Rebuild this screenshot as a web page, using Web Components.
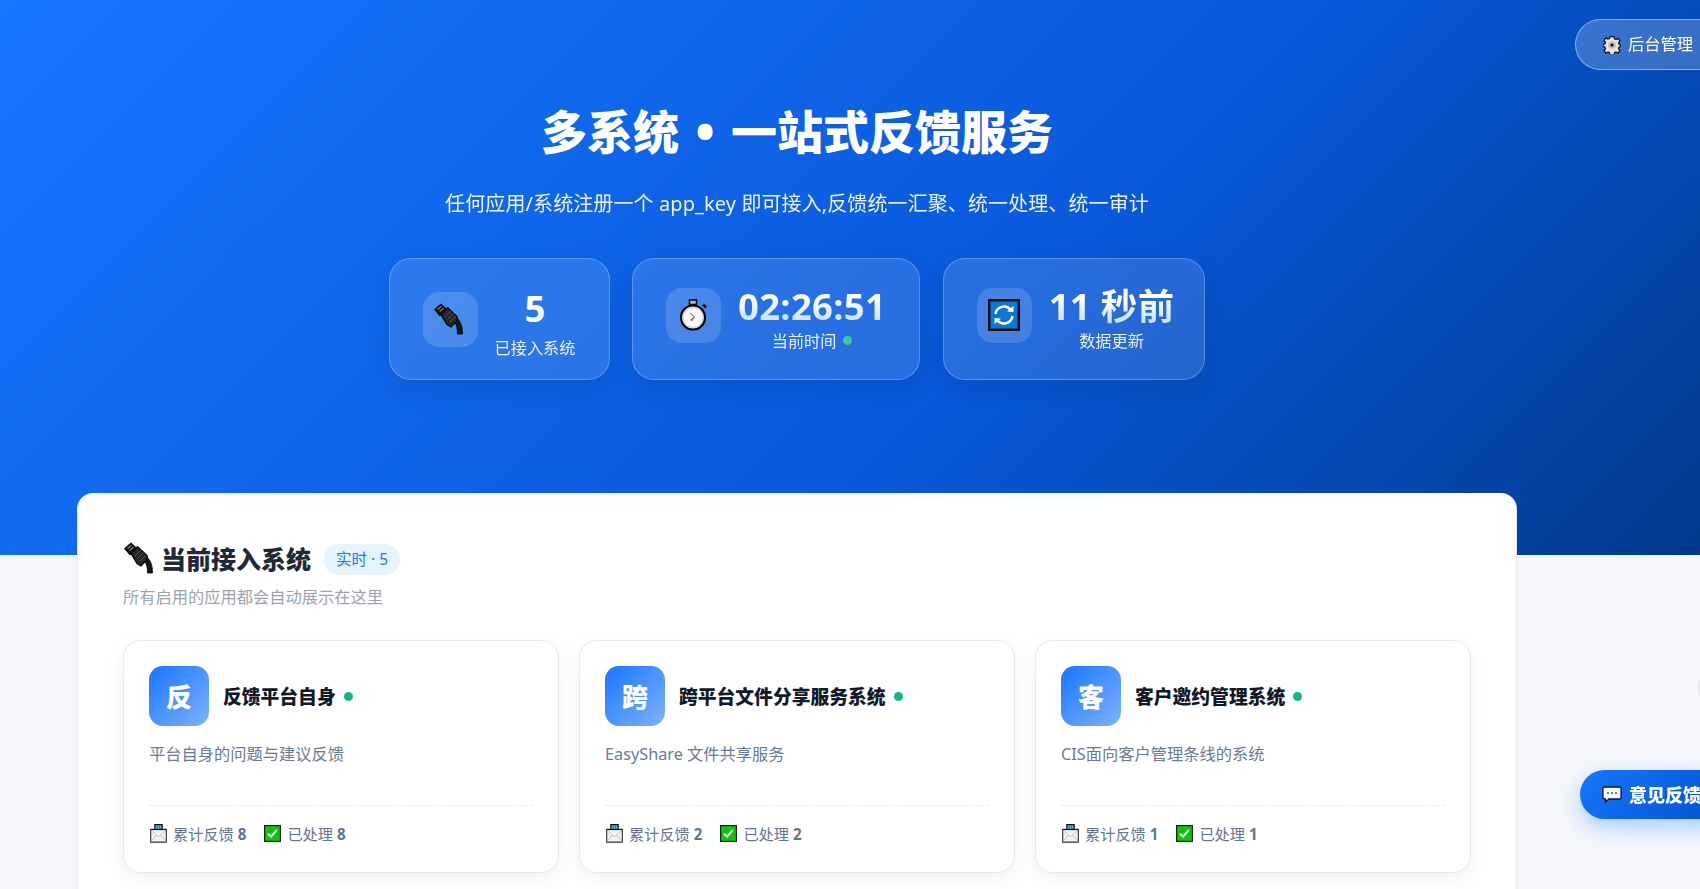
<!DOCTYPE html>
<html lang="zh">
<head>
<meta charset="utf-8">
<title>反馈服务</title>
<style>
  html, body { margin: 0; padding: 0; height: 889px; overflow: hidden; }
  body {
    background: #f5f7fb;
    font-family: "Noto Sans", "Noto Sans CJK SC", sans-serif;
  }
</style>
</head>
<body>
<hero-banner>
  <stat-card value="5" label="已接入系统" icon="plug" plain></stat-card>
  <stat-card value="02:26:51" label="当前时间" icon="watch" live></stat-card>
  <stat-card value="11 秒前" label="数据更新" icon="sync" tight></stat-card>
</hero-banner>
<system-panel>
  <system-card letter="反" name="反馈平台自身" desc="平台自身的问题与建议反馈" total="8" done="8"></system-card>
  <system-card letter="跨" name="跨平台文件分享服务系统" desc="EasyShare 文件共享服务" total="2" done="2"></system-card>
  <system-card letter="客" name="客户邀约管理系统" desc="CIS面向客户管理条线的系统" total="1" done="1"></system-card>
</system-panel>
<admin-link></admin-link>
<feedback-fab></feedback-fab>
<edge-button></edge-button>

<script>
const PLUG = `<path d="M0 6.5 L7 .5 L13.5 6.5 L9 13 L5.5 13 Z" fill="#0a0a0a"/>
    <path d="M3.5 6.5 l4 -3.2 M5.5 8.5 l4 -3.2 M7.5 10.5 l4 -3.2" stroke="#8a8a8a" stroke-width="1.1"/>
    <path d="M20.5 19 L23 15 C27 19 28.5 24 28.5 31 L23.5 31 C23.5 26 23 23 20.5 19Z" fill="#161616" stroke="#000" stroke-width=".8"/>
    <path d="M7 11.5 L13.5 4.5 L23 13.5 L23.5 17 L17 24 L13 21.5 Z" fill="#262626" stroke="#000" stroke-width="1.2"/>
    <path d="M11 14 l6 -6 M13.5 16.5 l6 -6 M16 19 l6 -6" stroke="#555" stroke-width="1"/>`

const ICONS = {
  plug: `<svg viewBox="0 0 32 32" width="32" height="32">${PLUG}</svg>`,
  watch: `<svg viewBox="0 0 32 32" width="32" height="32">
    <rect x="11.5" y="1" width="7" height="4.5" fill="#bdbdbd" stroke="#111" stroke-width="1.6"/>
    <path d="M25 5.5 l3 3" stroke="#111" stroke-width="2.8"/>
    <circle cx="15" cy="18.5" r="12" fill="#e9e9e9" stroke="#000" stroke-width="2.2"/>
    <circle cx="15" cy="18.5" r="9.8" fill="#f8f8f8" stroke="#cfcfcf" stroke-width="1"/>
    <path d="M12 14 L16.5 18 L12.5 21" fill="none" stroke="#666" stroke-width="1"/>
    <path d="M16.5 18 L13.5 22" stroke="#e8465a" stroke-width="1.2"/>
  </svg>`,
  sync: `<svg viewBox="0 0 32 32" width="32" height="32">
    <rect x="1.2" y="1.2" width="29.6" height="29.6" fill="#0a78d4" stroke="#06080f" stroke-width="2.4"/>
    <path d="M7.5 15 A8.6 8.6 0 0 1 22.5 10.5" fill="none" stroke="#fff" stroke-width="2.4"/>
    <path d="M19 12.5 L25.5 13 L25.5 7 Z" fill="#fff"/>
    <path d="M24.5 17 A8.6 8.6 0 0 1 9.5 21.5" fill="none" stroke="#fff" stroke-width="2.4"/>
    <path d="M13 19.5 L6.5 19 L6.5 25 Z" fill="#fff"/>
  </svg>`,
  mail: `<svg class="mail" viewBox="0 0 18 18" width="17" height="19" preserveAspectRatio="none">
    <rect x="5" y="0.5" width="8" height="6" fill="#0d7fb8" stroke="#111"/>
    <path d="M7 1.5 v3 M9 1.5 v3 M11 1.5 v3" stroke="#7fd0f0" stroke-width=".8"/>
    <rect x="0.7" y="5.2" width="16.6" height="12" fill="#f4f4f4" stroke="#444" stroke-width="1.3"/>
    <path d="M1 6 L9 12 L17 6 M1 16.5 L7 10.5 M17 16.5 L11 10.5" fill="none" stroke="#bbb" stroke-width=".8"/>
    <path d="M0.5 5.2 h17" stroke="#111"/>
  </svg>`,
  check: `<svg viewBox="0 0 17 17" width="17" height="17">
    <rect x="0.6" y="0.6" width="15.8" height="15.8" fill="#12c40f" stroke="#0a2a0a" stroke-width="1.2"/>
    <path d="M4 8.8 L7 11.6 L12.8 5.2" fill="none" stroke="#fff" stroke-width="1.8"/>
  </svg>`,
  gear: `<svg viewBox="0 0 18 18" width="18" height="18">
    <path d="M7 .8h4l.5 2.2 1.6.7 2-1.2 2 2.6-1.5 1.8.5 1.6 1.9.9v1.2l-1.9.9-.5 1.6 1.5 1.8-2 2.6-2-1.2-1.6.7-.5 1.9H7l-.5-1.9-1.6-.7-2 1.2-2-2.6 1.5-1.8-.5-1.6-1.9-.9V8.9l1.9-.9.5-1.6-1.5-1.8 2-2.6 2 1.2 1.6-.7z" transform="translate(.1 -.1) scale(.99)" fill="#e4e4e4" stroke="#111" stroke-width="1.2"/>
    <circle cx="9" cy="9" r="3.8" fill="#bdbdbd"/>
    <circle cx="9" cy="9" r="1.6" fill="#111"/>
  </svg>`,
  chat: `<svg viewBox="0 0 20 17" width="20" height="17">
    <path d="M2.5 1h15a1.6 1.6 0 0 1 1.6 1.6v8.8a1.6 1.6 0 0 1-1.6 1.6H7L3.4 16V13h-.9A1.6 1.6 0 0 1 .9 11.4V2.6A1.6 1.6 0 0 1 2.5 1z" fill="#f7f7f7" stroke="#0b1530" stroke-width="1.4"/>
    <circle cx="6" cy="7" r="1" fill="#555"/><circle cx="10" cy="7" r="1" fill="#555"/><circle cx="14" cy="7" r="1" fill="#555"/>
  </svg>`,
}

customElements.define('hero-banner', class HeroBanner extends HTMLElement {
  constructor() {
    super()
    this.attachShadow({ mode: 'open' })
    this.shadowRoot.innerHTML = `
      <style>
        :host {
          display: block;
          height: 555px;
          box-sizing: border-box;
          padding-top: 96px;
          color: #fff;
          background: linear-gradient(135deg, #1677ff 0%, #0958d9 60%, #003a8c 100%);
        }
        .inner { width: 1440px; margin-left: 77px; text-align: center; }
        h1 { margin: 0; font-size: 46px; line-height: 70px; font-weight: 900; word-spacing: 5px; }
        p { margin: 23px 0 0; font-size: 20px; line-height: 30px; letter-spacing: .1px; opacity: .92; }
        .stats { display: flex; justify-content: center; gap: 22.5px; margin-top: 39px; }
      </style>
      <div class="inner">
        <h1>多系统 • 一站式反馈服务</h1>
        <p>任何应用/系统注册一个 app_key 即可接入,反馈统一汇聚、统一处理、统一审计</p>
        <div class="stats"><slot></slot></div>
      </div>
    `
  }
})

customElements.define('stat-card', class StatCard extends HTMLElement {
  constructor() {
    super()
    this.attachShadow({ mode: 'open' })
  }

  connectedCallback() {
    const plain = this.hasAttribute('plain')
    const live = this.hasAttribute('live') ? '<i></i>' : ''
    const right = this.hasAttribute('tight') ? 30 : 33
    this.shadowRoot.innerHTML = `
      <style>
        :host {
          display: flex;
          align-items: center;
          gap: 17px;
          height: 122px;
          box-sizing: border-box;
          padding: 0 ${right}px ${plain ? 0 : 8}px 33px;
          border: 1px solid rgba(255,255,255,.25);
          border-radius: 22px;
          background: rgba(255,255,255,.12);
          box-shadow: 0 8px 24px rgba(0,0,0,.1);
        }
        .icon {
          width: 55px; height: 55px;
          border-radius: 16px;
          background: rgba(255,255,255,.15);
          display: flex; align-items: center; justify-content: center;
          flex: none;
        }
        .text { text-align: center; min-width: 80px; margin-top: ${plain ? 6 : 5}px; }
        .value { font-size: 36.5px; line-height: 44px; font-weight: 700; letter-spacing: .3px; white-space: nowrap; }
        .grad {
          background: linear-gradient(180deg, #fff 35%, #b8d8ff 100%);
          -webkit-background-clip: text; background-clip: text; color: transparent;
        }
        .label { font-size: 16.2px; line-height: 20px; margin-top: ${plain ? 8 : 2.5}px; opacity: .9; white-space: nowrap; }
        i { display: inline-block; width: 9px; height: 9px; border-radius: 50%; background: #3dd68c; margin-left: 7px; vertical-align: 2px; }
      </style>
      <div class="icon">${ICONS[this.getAttribute('icon')]}</div>
      <div class="text">
        <div class="value ${plain ? '' : 'grad'}">${this.getAttribute('value')}</div>
        <div class="label">${this.getAttribute('label')}${live}</div>
      </div>
    `
  }
})

customElements.define('system-panel', class SystemPanel extends HTMLElement {
  constructor() {
    super()
    this.attachShadow({ mode: 'open' })
    this.shadowRoot.innerHTML = `
      <style>
        :host {
          display: block;
          position: relative;
          width: 1440px;
          height: 396px;
          box-sizing: border-box;
          margin: -62px 0 0 77px;
          padding: 48px 45px 0;
          background: #fff;
          border: 1px solid #e6e9f2;
          border-width: 0 1px;
          border-radius: 16px 16px 0 0;
        }
        .title { display: flex; align-items: center; height: 34px; }
        .title svg { margin-right: 5px; margin-left: 1px; }
        h2 { margin: 0; font-size: 25px; font-weight: 900; color: #1f2937; }
        .badge { margin: 2px 0 0 13px; height: 31px; line-height: 31px; padding: 0 12px; border-radius: 16px; background: #e6f4ff; color: #1677ff; font-size: 15.5px; }
        .sub { margin-top: 10px; font-size: 16.25px; line-height: 24px; color: #9ca3af; }
        .grid { display: grid; grid-template-columns: repeat(3, 436px); gap: 20px; margin-top: 31px; }
      </style>
      <div class="title">
        ${ICONS.plug}
        <h2>当前接入系统</h2>
        <span class="badge">实时 · 5</span>
      </div>
      <div class="sub">所有启用的应用都会自动展示在这里</div>
      <div class="grid"><slot></slot></div>
    `
  }
})

customElements.define('system-card', class SystemCard extends HTMLElement {
  constructor() {
    super()
    this.attachShadow({ mode: 'open' })
  }

  connectedCallback() {
    const attr = n => this.getAttribute(n)
    this.shadowRoot.innerHTML = `
      <style>
        :host {
          display: block;
          box-sizing: border-box;
          height: 233px;
          padding: 25px 25px 0;
          border: 1px solid #e6e9f2;
          border-radius: 18px;
          background: #fff;
          box-shadow: 0 6px 20px rgba(15,23,42,.06);
        }
        .head { display: flex; align-items: center; }
        .logo {
          width: 60px; height: 60px; border-radius: 14px;
          background: linear-gradient(135deg, #1677ff, #80b1ff);
          color: #fff; font-size: 26px; font-weight: 900;
          display: flex; align-items: center; justify-content: center;
        }
        .name { margin-left: 14px; font-size: 18.8px; font-weight: 900; color: #111827; }
        .dot { width: 9px; height: 9px; border-radius: 50%; background: #10b981; margin-left: 8px; }
        .desc { margin-top: 16px; height: 63px; font-size: 16.25px; line-height: 24px; color: #6b7a90; }
        .foot { display: flex; align-items: center; padding-top: 14px; border-top: 1px dashed #e6e9f2; font-size: 15.2px; color: #64748b; height: 26px; }
        .foot span { display: flex; align-items: center; gap: 6px; margin-right: 18px; }
        .mail { margin-left: 1px; }
        em { font-style: normal; }
        b { font-weight: 700; }
      </style>
      <div class="head">
        <div class="logo">${attr('letter')}</div>
        <div class="name">${attr('name')}</div>
        <div class="dot"></div>
      </div>
      <div class="desc">${attr('desc')}</div>
      <div class="foot">
        <span>${ICONS.mail}<em>累计反馈 <b>${attr('total')}</b></em></span>
        <span>${ICONS.check}<em>已处理 <b>${attr('done')}</b></em></span>
      </div>
    `
  }
})

customElements.define('admin-link', class AdminLink extends HTMLElement {
  constructor() {
    super()
    this.attachShadow({ mode: 'open' })
    this.shadowRoot.innerHTML = `
      <style>
        :host {
          position: fixed; top: 19px; left: 1575px;
          display: flex; align-items: center; gap: 7px;
          width: 160px; height: 51px; box-sizing: border-box;
          padding-left: 27px;
          border: 1px solid rgba(255,255,255,.45);
          border-radius: 26px;
          background: rgba(255,255,255,.2);
          color: #fff; font-size: 16.3px; white-space: nowrap;
        }
        span { margin-top: -3px; }
      </style>
      ${ICONS.gear}<span>后台管理</span>
    `
  }
})

customElements.define('feedback-fab', class FeedbackFab extends HTMLElement {
  constructor() {
    super()
    this.attachShadow({ mode: 'open' })
    this.shadowRoot.innerHTML = `
      <style>
        :host {
          position: fixed; top: 770px; left: 1580px;
          display: flex; align-items: center; gap: 7px;
          width: 160px; height: 49px; box-sizing: border-box;
          padding-left: 22px;
          border-radius: 25px;
          background: linear-gradient(135deg, #1677ff, #0050c8);
          box-shadow: 0 8px 22px rgba(22,119,255,.35);
          color: #fff; font-size: 18px; font-weight: 900; white-space: nowrap;
        }
        span { margin-top: -2px; }
      </style>
      ${ICONS.chat}<span>意见反馈</span>
    `
  }
})

// round button that sits almost fully off screen, only its edge shows
customElements.define('edge-button', class EdgeButton extends HTMLElement {
  constructor() {
    super()
    this.attachShadow({ mode: 'open' })
    this.shadowRoot.innerHTML = `
      <style>
        :host {
          position: fixed; top: 666px; left: 1698px;
          display: block; width: 44px; height: 44px;
          border-radius: 50%;
          background: #e4e6eb;
        }
      </style>
    `
  }
})
</script>
</body>
</html>
